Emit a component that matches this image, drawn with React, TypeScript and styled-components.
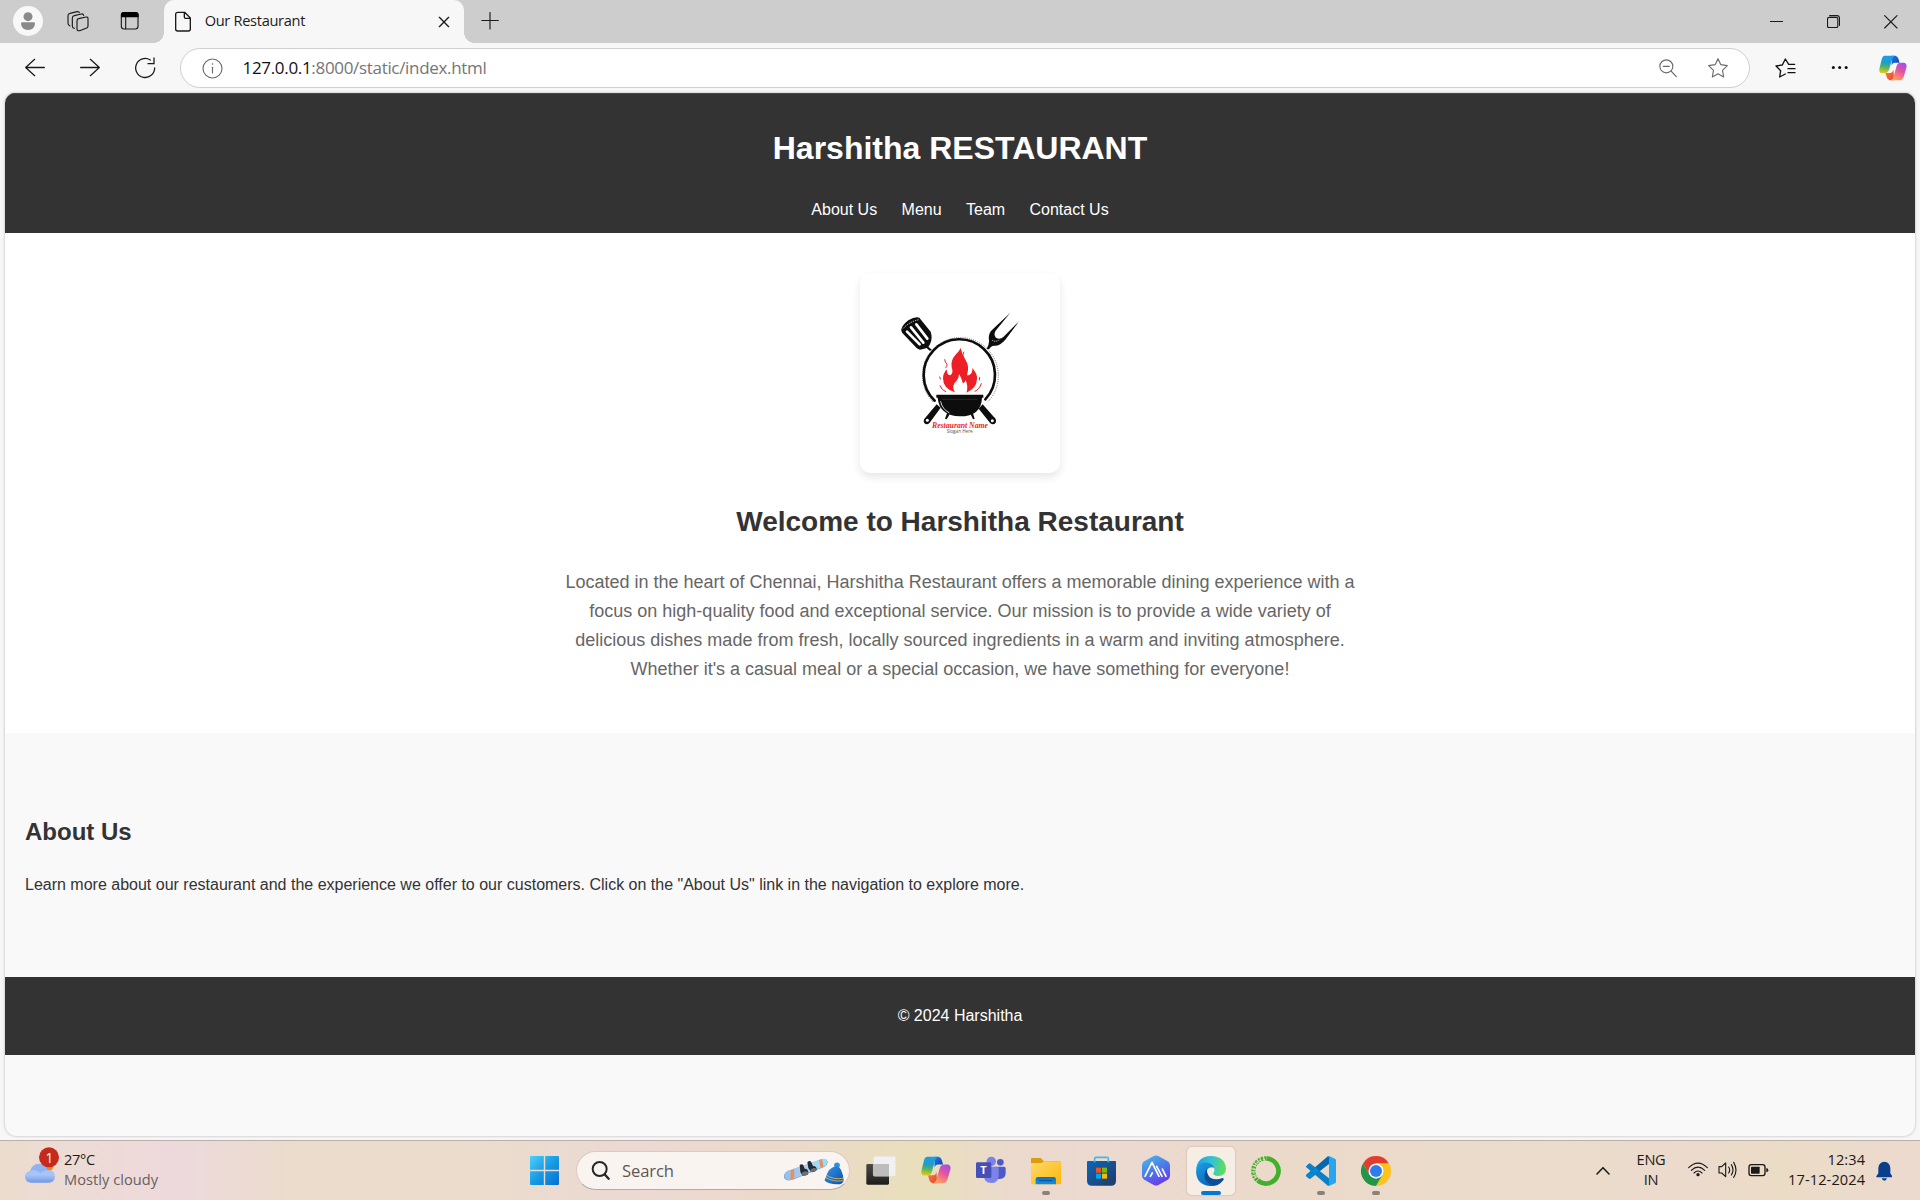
import React from "react";
import styled, { createGlobalStyle } from "styled-components";

const UI = `"Segoe UI", "Open Sans", "Noto Sans", sans-serif`;
const PAGE = `Arial, "Liberation Sans", sans-serif`;

const Global = createGlobalStyle`
  *, *::before, *::after { box-sizing: border-box; }
  body { margin: 0; background: #f7f7f7; overflow: hidden; }
  h1, h2, p { margin: 0; }
`;

const Screen = styled.div`
  width: 1920px;
  height: 1200px;
  display: flex;
  flex-direction: column;
  background: #f7f7f7;
  font-family: ${UI};
  overflow: hidden;
`;

/* ---------- icons ---------- */

/* Icons are drawn on a grid of three units per pixel. */
const Svg = styled.svg<{ $ml?: number; $dy?: number }>`
  display: block;
  flex: none;
  margin-left: ${(p) => p.$ml ?? 0}px;
  margin-top: ${(p) => p.$dy ?? 0}px;
`;

type GlyphProps = {
  box: [number, number, number, number];
  ml?: number;
  dy?: number;
  color?: string;
  sw?: number;
  children: React.ReactNode;
};

const Glyph = ({ box, ml, dy, color = "#1a1a1a", sw = 3.4, children }: GlyphProps) => (
  <Svg
    $ml={ml}
    $dy={dy}
    width={box[2] / 3}
    height={box[3] / 3}
    viewBox={box.join(" ")}
    fill="none"
    stroke={color}
    strokeWidth={sw}
    strokeLinecap="round"
    strokeLinejoin="round"
  >
    {children}
  </Svg>
);

const CopilotArt = ({ id }: { id: string }) => (
  <>
    <defs>
      <linearGradient id={id + "a"} x1="0.3" y1="0" x2="0.2" y2="1">
        <stop offset="0" stopColor="#1e9bea" />
        <stop offset="0.4" stopColor="#1f9fc4" />
        <stop offset="0.65" stopColor="#59b55c" />
        <stop offset="1" stopColor="#f5cb08" />
      </linearGradient>
      <linearGradient id={id + "b"} x1="0.8" y1="0" x2="0.3" y2="1">
        <stop offset="0" stopColor="#a04df0" />
        <stop offset="0.45" stopColor="#e5539f" />
        <stop offset="1" stopColor="#ffa35c" />
      </linearGradient>
      <linearGradient id={id + "c"} x1="0" y1="0" x2="1" y2="1">
        <stop offset="0" stopColor="#1b7fe0" />
        <stop offset="1" stopColor="#1436b8" />
      </linearGradient>
      <linearGradient id={id + "d"} x1="0" y1="0" x2="1" y2="1">
        <stop offset="0" stopColor="#f9862f" />
        <stop offset="1" stopColor="#e8403a" />
      </linearGradient>
    </defs>
    <g stroke="none">
      <path d="M41 0 H53 Q60 1 63 10 L67 23 H50 Q44 23 41 32 Z" fill={`url(#${id}c)`} />
      <path d="M49 80 H35 Q28 79 25 70 L21 56 H38 Q44 56 47 46 Z" fill={`url(#${id}d)`} />
      <path d="M19 0 H51 Q45 3 42 13 L33 45 Q29 57 18 57 H9 Q-2 56 2 39 L9 11 Q12 0 19 0 Z" fill={`url(#${id}a)`} />
      <path d="M72 23 H80 Q92 24 89 39 L80 69 Q76 80 67 80 H38 Q45 77 48 66 L57 34 Q60 23 72 23 Z" fill={`url(#${id}b)`} />
    </g>
  </>
);

/* ---------- browser chrome ---------- */

const TabStrip = styled.div`
  height: 43px;
  flex: none;
  display: flex;
  align-items: center;
  background: #cdcdcd;
`;

const Tab = styled.div`
  position: relative;
  width: 300px;
  height: 43px;
  margin-left: 24px;
  padding-left: 11px;
  display: flex;
  align-items: center;
  background: #f7f7f7;
  border-radius: 10px 10px 0 0;

  &::before,
  &::after {
    content: "";
    position: absolute;
    bottom: 0;
    width: 10px;
    height: 10px;
  }
  &::before {
    left: -10px;
    background: radial-gradient(circle at 0 0, #cdcdcd 9.5px, #f7f7f7 10px);
  }
  &::after {
    right: -10px;
    background: radial-gradient(circle at 100% 0, #cdcdcd 9.5px, #f7f7f7 10px);
  }
`;

const TabTitle = styled.span`
  width: 233.5px;
  margin-left: 13px;
  margin-top: -3px;
  font-size: 14.6px;
  letter-spacing: -0.3px;
  color: #1b1b1b;
  white-space: nowrap;
`;

const WindowControls = styled.div`
  display: flex;
  align-items: center;
  margin-left: auto;
  padding-right: 22px;
`;

const Toolbar = styled.div`
  height: 50px;
  flex: none;
  display: flex;
  align-items: center;
  padding-left: 25px;
`;

const AddressBar = styled.div`
  width: 1570px;
  height: 40px;
  margin-left: 24.5px;
  display: flex;
  align-items: center;
  background: #fff;
  border: 1px solid #cfcfcf;
  border-radius: 20px;
`;

const Url = styled.span`
  flex: 1;
  margin-left: 19.5px;
  margin-top: -2px;
  font-size: 17px;
  letter-spacing: -0.32px;
  color: #757575;
  white-space: nowrap;
  b { font-weight: 400; color: #111; }
`;

/* ---------- web page ---------- */

const Viewport = styled.div`
  width: 1910px;
  height: 1043px;
  flex: none;
  margin: 0 5px;
  display: flex;
  flex-direction: column;
  background: #f9f9f9;
  border-radius: 10px 10px 12px 12px;
  box-shadow: 0 0 2px 1px #d5d5d5;
  overflow: hidden;
  font-family: ${PAGE};
  color: #333;
`;

const Header = styled.header`
  height: 140px;
  flex: none;
  padding-top: 36px;
  background: #333;
  border-top: 1px solid #474747;
  color: #fff;
  text-align: center;
`;

const SiteTitle = styled.h1`
  font-size: 32px;
  line-height: 37px;
`;

const Nav = styled.nav`
  display: flex;
  justify-content: center;
  gap: 24.4px;
  margin-top: 34px;
  font-size: 16px;
  line-height: 18px;
`;

const Hero = styled.section`
  height: 500px;
  flex: none;
  display: flex;
  flex-direction: column;
  align-items: center;
  padding-top: 40px;
  background: #fff;
  text-align: center;
`;

const LogoCard = styled.div`
  width: 200px;
  height: 200px;
  border-radius: 10px;
  background: #fff;
  box-shadow: 0 4px 8px rgba(0, 0, 0, 0.1);
`;

const HeroTitle = styled.h2`
  margin-top: 32px;
  font-size: 28px;
  line-height: 33px;
`;

const HeroText = styled.p`
  width: 800px;
  margin-top: 30px;
  font-size: 18px;
  line-height: 29px;
  color: #666;
`;

const About = styled.section`
  height: 244px;
  flex: none;
  padding: 85px 20px 0;
`;

const AboutTitle = styled.h2`
  font-size: 24px;
  line-height: 28px;
`;

const AboutText = styled.p`
  margin-top: 30px;
  font-size: 16px;
  line-height: 18px;
`;

const Footer = styled.footer`
  height: 78px;
  flex: none;
  display: flex;
  align-items: center;
  justify-content: center;
  background: #333;
  color: #fff;
  font-size: 16px;
`;

/* ---------- taskbar ---------- */

const Taskbar = styled.div`
  height: 60px;
  flex: none;
  margin-top: 4px;
  display: flex;
  align-items: center;
  border-top: 1px solid #b9aea9;
  background: linear-gradient(90deg, #ebdccd 0, #eddbd6 80px, #edd9dc 180px, #ebdccb 300px, #ebdccd 480px, #ecd9d3 640px, #ebdac9 800px, #e9dfbb 920px, #ebdacd 1010px, #ecd9d1 1120px, #ebdac9 1300px, #ebdccb 1560px, #ecdacd 1680px, #ebdcc6 1780px, #ecdacf 1920px);
`;

const Weather = styled.div`
  width: 520px;
  display: flex;
  align-items: center;
  padding-left: 25px;
`;

const Lines = styled.div<{ $align?: string; $ml?: number; $w?: number; $ls?: number }>`
  display: flex;
  flex-direction: column;
  margin-left: ${(p) => p.$ml ?? 0}px;
  margin-top: -4px;
  width: ${(p) => (p.$w ? p.$w + "px" : "auto")};
  text-align: ${(p) => p.$align ?? "left"};
  font-size: 14.6px;
  line-height: 20px;
  letter-spacing: ${(p) => p.$ls ?? -0.3}px;
  color: #1d1a18;
  white-space: nowrap;
`;

const Muted = styled.span`
  color: #66605d;
  letter-spacing: 0.05px;
`;

const Cell = styled.div<{ $active?: boolean; $mark?: "dot" | "bar" }>`
  position: relative;
  width: 48px;
  height: 48px;
  flex: none;
  display: flex;
  align-items: center;
  justify-content: center;
  border-radius: 5px;
  background: ${(p) => (p.$active ? "#f6ede5" : "transparent")};
  box-shadow: ${(p) => (p.$active ? "0 0 1px 1px rgba(160, 130, 110, 0.18)" : "none")};

  &::after {
    content: "";
    display: ${(p) => (p.$mark ? "block" : "none")};
    position: absolute;
    bottom: 0;
    left: 50%;
    transform: translateX(-50%);
    width: ${(p) => (p.$mark === "bar" ? 20 : 8)}px;
    height: 4px;
    border-radius: 2px;
    background: ${(p) => (p.$mark === "bar" ? "#0078d4" : "#8b817b")};
  }
`;

const Apps = styled.div`
  display: flex;
  gap: 7px;
  margin-left: 7px;
`;

const Search = styled.div`
  width: 274px;
  height: 39px;
  margin-left: 8px;
  margin-top: -1px;
  padding-left: 14px;
  display: flex;
  align-items: center;
  border-radius: 20px;
  background: #faf4f1;
  border: 1px solid #dccac2;
  border-bottom-color: #b9a8a2;
`;

const SearchLabel = styled.span`
  width: 147px;
  margin-left: 12px;
  font-size: 16.6px;
  letter-spacing: -0.1px;
  color: #5d5855;
`;

const Tray = styled.div`
  flex: 1;
  display: flex;
  align-items: center;
`;

/* ---------- logo ---------- */

const RestaurantLogo = () => (
  <svg width="200" height="200" viewBox="60 38 600 600" fill="none">
    <g fill="#0d0d0d">
      <path d="M184 207 Q187 194 205 180 Q225 168 238 172 L272 214 Q278 232 271 249 Q266 263 258 264 L240 268 Q234 267 229 262 L187 218 Q183 213 184 207 Z" />
      <path d="M262 256 L276 269 L269 271 L259 262 Z" />
      <path d="M511 157 L468 210 Q459 222 468 232 Q479 239 490 230 L537 183 L496 238 Q480 257 463 256 Q452 257 447 267 L440 265 Q448 253 447 241 Q444 220 456 209 Z" />
      <path d="M289 403 H430 V412 H426 Q424 468 360 468 Q298 466 293 412 H289 Z" />
      <path d="M322 456 L330 460 L320 477 L315 475 Z M398 456 L391 460 L399 477 L404 475 Z" />
      <path d="M290 432 L302 442 L269 487 Q260 496 253 488 Q248 480 256 472 Z" />
      <path d="M428 432 L416 445 L451 489 Q461 496 467 487 Q471 476 461 469 Z" />
    </g>
    <path d="M190 204 Q210 183 237 178" stroke="#fff" strokeWidth="2.5" strokeDasharray="4 3" />
    <g stroke="#fff" strokeWidth="8" strokeLinecap="round">
      <path d="M201 214 L239 252 M213 201 L250 247 M229 192 L262 235" />
    </g>
    <path d="M284 421 A107 107 0 1 1 436 417" stroke="#0d0d0d" strokeWidth="8" strokeLinecap="round" />
    <path d="M279 425 A114 114 0 1 1 444 424" stroke="#333" strokeWidth="2.4" strokeDasharray="2.5 4" />
    <path d="M302 424 Q307 447 327 457" stroke="#fff" strokeWidth="2.5" strokeLinecap="round" />
    <path d="M306 417 H412" stroke="#444" strokeWidth="1.5" />
    <circle cx="262" cy="480" r="4.5" fill="#fff" />
    <circle cx="457" cy="481" r="4.5" fill="#fff" />
    <path d="M456 239 Q466 247 479 238" stroke="#fff" strokeWidth="2" strokeDasharray="4 2" />
    <g fill="#ee1f25">
      <path d="M362 263 Q366 284 378 301 Q388 318 382 340 Q379 348 388 344 Q399 338 397 323 Q413 341 411 357 Q409 386 379 397 Q386 379 377 360 Q373 371 368 367 Q364 351 357 341 Q356 357 343 369 Q336 383 345 396 Q309 386 309 354 Q309 340 320 327 Q321 347 332 344 Q341 338 335 321 Q332 299 346 284 Q358 273 362 263 Z" />
    </g>
    <g stroke="#ee1f25" strokeWidth="3" strokeLinecap="round">
      <path d="M314 298 Q315 306 321 312 Q322 319 318 322 M371 275 Q366 285 371 294 M299 350 L301 356 M300 376 Q305 390 317 394 M405 393 Q418 388 424 370 M419 351 L418 359" />
    </g>
    <text x="276" y="503" textLength="168" lengthAdjust="spacingAndGlyphs" fontFamily="'Liberation Serif', serif" fontStyle="italic" fontWeight="700" fontSize="22" fill="#ee1f25">Restaurant Name</text>
    <text x="320" y="519" textLength="78" lengthAdjust="spacingAndGlyphs" fontFamily="'Open Sans', sans-serif" fontSize="14" fill="#555">Slogan Here</text>
  </svg>
);

export default function App() {
  return (
    <Screen>
      <Global />
      <TabStrip>
        <Glyph box={[39, 18, 90, 90]} ml={13} dy={-1}>
          <g stroke="none">
            <circle cx="84" cy="63" r="45" fill="#f8f8f8" />
            <circle cx="84" cy="50" r="13.5" fill="#8a8a8a" />
            <path d="M67 67 H101 Q105 67 105 71 Q104 89 84 90 Q64 89 63 71 Q63 67 67 67 Z" fill="#8a8a8a" />
          </g>
        </Glyph>
        <Glyph box={[200, 30, 66, 66]} ml={23.7} dy={-1}>
          <path d="M235 56 L257 51 Q263 50 263 56 V78 Q263 82 259 84 L238 92 Q230 94 230 86 V62 Q230 57 235 56 Z" />
          <path d="M222 85 Q216 84 216 77 V54 Q216 48 222 47 L243 42 Q249 41 250 46" />
          <path d="M209 78 Q203 76 203 70 V47 Q203 41 209 40 L230 35 Q236 34 237 38" />
        </Glyph>
        <Glyph box={[361, 34, 60, 60]} ml={31.3} dy={-1}>
          <rect x="365" y="39" width="50" height="49" rx="8" />
          <path d="M364 53 V46 Q364 37 373 37 H407 Q417 37 417 46 V53 Z" fill="#000" stroke="none" />
          <path d="M378 53 V87" />
        </Glyph>
        <Tab>
          <Glyph box={[525, 34, 50, 64]} dy={1} sw={4}>
            <path d="M533 38 H554 L571 55 V88 Q571 94 565 94 H533 Q527 94 527 88 V44 Q527 38 533 38 Z M553 39 V52 Q553 56 557 56 H570" />
          </Glyph>
          <TabTitle>Our Restaurant</TabTitle>
          <Glyph box={[1315, 49, 36, 36]} dy={1} sw={4}>
            <path d="M1319 53 L1347 81 M1347 53 L1319 81" />
          </Glyph>
        </Tab>
        <Glyph box={[1444, 36, 54, 54]} ml={17.5} dy={-2}>
          <path d="M1446.500 61.500 H1496 M1471 37.500 V87" />
        </Glyph>
        <WindowControls>
          <Glyph box={[510, 45, 39, 39]}>
            <path d="M511 64.500 H548" strokeWidth="3" />
          </Glyph>
          <Glyph box={[681, 44, 40, 40]} ml={44}>
            <rect x="682.500" y="51" width="31" height="31" rx="5" />
            <path d="M689 46 H711 Q718.500 46 718.500 54 V75" />
          </Glyph>
          <Glyph box={[853, 44, 42, 42]} ml={44}>
            <path d="M855 46 L892 83 M892 46 L855 83" />
          </Glyph>
        </WindowControls>
      </TabStrip>
      <Toolbar>
        <Glyph box={[75, 172, 60, 57]} dy={-2} sw={3.8}>
          <path d="M77 200.500 H133 M104 176 L77 200.500 L104 225" />
        </Glyph>
        <Glyph box={[240, 172, 60, 57]} ml={35} dy={-2} sw={3.8}>
          <path d="M242 200.500 H298 M271 176 L298 200.500 L271 225" />
        </Glyph>
        <Glyph box={[404, 170, 63, 66]} ml={34.5} dy={-1} sw={3.8}>
          <path d="M450 179 A28.500 28.500 0 1 0 463 203 M461 173 V190 H443" strokeLinejoin="miter" />
        </Glyph>
        <AddressBar>
          <Glyph box={[606, 173, 63, 63]} ml={21} color="#6b6b6b">
            <circle cx="637.500" cy="204.500" r="28.500" />
            <path d="M637.500 201 V218" />
            <circle cx="637.500" cy="191" r="2.400" fill="#6b6b6b" stroke="none" />
          </Glyph>
          <Url><b>127.0.0.1</b>:8000/static/index.html</Url>
          <Glyph box={[179, 176, 57, 57]} color="#6b6b6b">
            <circle cx="201" cy="198" r="19.500" />
            <path d="M192 198 H210 M215 212 L231 229" />
          </Glyph>
          <Glyph box={[0, 0, 60, 60]} ml={30} color="#6b6b6b">
            <path d="M30 2 L38.500 20 L58 23 L43.500 37 L47 57 L30 47.500 L13 57 L16.500 37 L2 23 L21.500 20 Z" />
          </Glyph>
          <Svg $ml={19.7} width="1" height="1" />
        </AddressBar>
        <Glyph box={[524, 174, 63, 60]} ml={24.5} dy={-1} color="#111" sw={4}>
          <path d="M583 193 H565 L555 177 L546 195 L527 198 L541 212 L538 231 L555 222 M563 206 H584 M563 218 H584" />
        </Glyph>
        <Glyph box={[694, 195, 51, 15]} ml={35.5} dy={-1}>
          <g fill="#111" stroke="none">
            <circle cx="701" cy="202.500" r="4.600" />
            <circle cx="720" cy="202.500" r="4.600" />
            <circle cx="739.500" cy="202.500" r="4.600" />
          </g>
        </Glyph>
        <Svg $ml={30.5} width="28" height="26" viewBox="0 -1 91 82">
          <CopilotArt id="tb" />
        </Svg>
      </Toolbar>

      <Viewport>
        <Header>
          <SiteTitle>Harshitha RESTAURANT</SiteTitle>
          <Nav>
            <span>About Us</span>
            <span>Menu</span>
            <span>Team</span>
            <span>Contact Us</span>
          </Nav>
        </Header>
        <Hero>
          <LogoCard>
            <RestaurantLogo />
          </LogoCard>
          <HeroTitle>Welcome to Harshitha Restaurant</HeroTitle>
          <HeroText>
            Located in the heart of Chennai, Harshitha Restaurant offers a memorable dining experience with a focus on
            high-quality food and exceptional service. Our mission is to provide a wide variety of delicious dishes made
            from fresh, locally sourced ingredients in a warm and inviting atmosphere. Whether it's a casual meal or a
            special occasion, we have something for everyone!
          </HeroText>
        </Hero>
        <About>
          <AboutTitle>About Us</AboutTitle>
          <AboutText>
            Learn more about our restaurant and the experience we offer to our customers. Click on the "About Us" link
            in the navigation to explore more.
          </AboutText>
        </About>
        <Footer>© 2024 Harshitha</Footer>
      </Viewport>

      <Taskbar>
        <Weather>
          <Glyph box={[75, 82, 102, 108]} dy={-11}>
            <defs>
              <linearGradient id="cloud" x1="0" y1="0" x2="0" y2="1">
                <stop offset="0" stopColor="#a9c8f7" />
                <stop offset="0.6" stopColor="#a6c4f8" />
                <stop offset="1" stopColor="#6f98e8" />
              </linearGradient>
            </defs>
            <g stroke="none">
              <circle cx="143" cy="139" r="17" fill="#f5821f" />
              <path d="M92 189 Q75 187 75 170 Q76 156 91 153 Q96 133 117 132 Q137 133 142 151 Q165 150 165 170 Q165 187 148 189 Z" fill="url(#cloud)" />
              <path d="M91 153 Q96 133 117 132 Q137 133 142 151 Q128 153 121 161 Q108 147 91 153 Z" fill="#7ea6ee" opacity="0.6" />
              <circle cx="147" cy="113" r="30" fill="#c42b1c" />
              <text x="148" y="129" textAnchor="middle" fontFamily="Open Sans, sans-serif" fontSize="41" fill="#fff">1</text>
            </g>
          </Glyph>
          <Lines $ml={5}>
            <span>27°C</span>
            <Muted>Mostly cloudy</Muted>
          </Lines>
        </Weather>
        <Cell>
          <Svg width="29" height="29" viewBox="0 0 29 29">
            <defs>
              <linearGradient id="win" x1="0" y1="0" x2="29" y2="29" gradientUnits="userSpaceOnUse">
                <stop offset="0" stopColor="#4cd0fb" />
                <stop offset="0.5" stopColor="#189be4" />
                <stop offset="1" stopColor="#0670cf" />
              </linearGradient>
            </defs>
            <path fill="url(#win)" d="M1 0H13.800V13.800H0V1Q0 0 1 0ZM15.200 0H28Q29 0 29 1V13.800H15.200ZM0 15.200H13.800V29H1Q0 29 0 28ZM15.200 15.200H29V28Q29 29 28 29H15.200Z" />
          </Svg>
        </Cell>
        <Search>
          <Glyph box={[241, 90, 57, 60]} sw={6} color="#262626">
            <circle cx="267" cy="117" r="21" />
            <path d="M283 134 L294 146" strokeWidth="7" />
          </Glyph>
          <SearchLabel>Search</SearchLabel>
          <Glyph box={[817, 84, 186, 84]} dy={3} ml={13.5}>
            <defs>
              <linearGradient id="board" x1="0" y1="0" x2="1" y2="0">
                <stop offset="0" stopColor="#8fbfe8" />
                <stop offset="0.5" stopColor="#b4cdf2" />
                <stop offset="1" stopColor="#8fe2f7" />
              </linearGradient>
              <linearGradient id="hat" x1="0" y1="0" x2="1" y2="1">
                <stop offset="0" stopColor="#2f97ec" />
                <stop offset="1" stopColor="#0d4fa4" />
              </linearGradient>
            </defs>
            <g stroke="none">
              <path d="M831 124 L935 87 Q950 86 951 97 Q950 106 940 111 L850 148 Q828 156 820 144 Q818 130 831 124 Z" fill="#6f97c6" />
              <path d="M831 122 L935 86 Q949 85 950 96 Q949 105 939 110 L850 146 Q828 155 821 142 Q819 128 831 122 Z" fill="url(#board)" />
              <path d="M840 121 L850 118 L851 146 L839 150 Z M925 90 L934 87 L939 110 L930 114 Z" fill="#e8915f" />
              <path d="M867 106 Q873 100 878 106 L882 116 Q894 116 893 130 Q888 138 876 137 L869 126 Z M890 97 Q897 89 902 97 L907 108 Q919 108 918 120 Q912 128 901 126 L893 114 Z" fill="#262b33" />
              <path d="M873 129 Q884 120 893 127 L892 134 Q884 138 876 137 Z M899 119 Q910 110 918 117 L916 123 Q909 127 901 126 Z" fill="#6b6f78" />
              <circle cx="979" cy="106" r="8.500" fill="#2b8fe8" />
              <path d="M945 144 Q953 111 978 108 Q996 113 999 152 Q996 164 978 163 Q954 162 942 152 Q942 146 945 144 Z" fill="url(#hat)" />
            </g>
            <path d="M948 136 Q968 150 996 145 M946 143 Q967 157 997 152" stroke="#e2b863" strokeWidth="2.500" />
          </Glyph>
        </Search>
        <Apps>
          <Cell>
            <Svg width="30" height="29" viewBox="0 0 90 87">
              <defs>
                <linearGradient id="tv" x1="0" y1="0" x2="0" y2="1">
                  <stop offset="0" stopColor="#4a4a48" />
                  <stop offset="1" stopColor="#1d1d1c" />
                </linearGradient>
              </defs>
              <rect x="1" y="24" width="68" height="62" rx="4" fill="url(#tv)" />
              <rect x="22" y="1" width="67" height="60" rx="4" fill="#f1f1f1" stroke="#dcdcdc" />
              <path d="M23 24 H69 V60 H26 Q23 60 23 57 Z" fill="#bdbdbb" />
            </Svg>
          </Cell>
          <Cell>
            <Svg width="30" height="28" viewBox="0 -1 91 82" $dy={-2}>
              <CopilotArt id="task" />
            </Svg>
          </Cell>
          <Cell>
            <Svg width="30" height="28" viewBox="228 78 90 84" $dy={-1}>
              <circle cx="274" cy="94" r="14" fill="#7b83eb" />
              <circle cx="301" cy="97" r="10" fill="#5059c9" />
              <path d="M284 110 H313 Q317 110 317 115 V130 Q316 147 299 147 H284 Z" fill="#5059c9" />
              <path d="M252 110 H290 Q296 110 296 116 V137 Q295 159 274 159 Q252 158 252 137 Z" fill="#7b83eb" />
              <rect x="228" y="97" width="46" height="47" rx="4" fill="#464eb8" />
              <text x="250.500" y="132" textAnchor="middle" fontFamily="Open Sans, sans-serif" fontWeight="700" fontSize="33" fill="#fff">T</text>
            </Svg>
          </Cell>
          <Cell $mark="dot">
            <Svg width="30" height="28" viewBox="393 78 90 84">
              <defs>
                <linearGradient id="fold" x1="0" y1="0" x2="1" y2="1">
                  <stop offset="0" stopColor="#ffd968" />
                  <stop offset="1" stopColor="#fbb70d" />
                </linearGradient>
                <linearGradient id="foldb" x1="0" y1="0" x2="0" y2="1">
                  <stop offset="0" stopColor="#0a70c4" />
                  <stop offset="1" stopColor="#1590e0" />
                </linearGradient>
              </defs>
              <path d="M396 81 H422 L431 90 H480 V110 H393 V84 Q393 81 396 81 Z" fill="#dd9c0c" />
              <path d="M393 96 H424 L432 91 H480 Q483 91 483 94 V156 Q483 160 480 160 H396 Q393 160 393 157 Z" fill="url(#fold)" />
              <path d="M407 160 V145 Q407 138 414 138 H461 Q468 138 468 145 V160 Z" fill="url(#foldb)" />
              <path d="M418 149 H457" stroke="#0a4f96" strokeWidth="3" />
            </Svg>
          </Cell>
          <Cell>
            <Svg width="29" height="30" viewBox="558 76 87 90">
              <defs>
                <linearGradient id="store" x1="0" y1="0" x2="1" y2="1">
                  <stop offset="0" stopColor="#0b66b8" />
                  <stop offset="1" stopColor="#243a66" />
                </linearGradient>
              </defs>
              <path d="M561 91 H642 Q645 91 645 94 V150 Q645 165 630 165 H573 Q558 165 558 150 V94 Q558 91 561 91 Z" fill="url(#store)" />
              <path d="M581 95 V84 Q581 80 585 80 H618 Q622 80 622 84 V95" fill="none" stroke="#35bff0" strokeWidth="5" />
              <path d="M585 111 H600 V126 H585 Z" fill="#f25022" />
              <path d="M603 111 H618 V126 H603 Z" fill="#7fba00" />
              <path d="M585 129 H600 V144 H585 Z" fill="#00a4ef" />
              <path d="M603 129 H618 V144 H603 Z" fill="#ffb900" />
            </Svg>
          </Cell>
          <Cell>
            <Svg width="30" height="31" viewBox="0 0 90 93">
              <defs>
                <linearGradient id="hex" x1="0.2" y1="0" x2="0.7" y2="1">
                  <stop offset="0" stopColor="#4cb4ea" />
                  <stop offset="0.5" stopColor="#4d78ea" />
                  <stop offset="1" stopColor="#6a35ea" />
                </linearGradient>
              </defs>
              <path d="M38 3 Q45 0 52 3 L80 19 Q87 23 87 31 V62 Q87 70 80 74 L52 90 Q45 93 38 90 L10 74 Q3 70 3 62 V31 Q3 23 10 19 Z" fill="url(#hex)" />
              <path d="M12 64 L33 22 L54 64 M28 64 L34 54 M47 34 L63 64 M64 42 L75 64" fill="none" stroke="#fff" strokeWidth="5" strokeLinecap="round" strokeLinejoin="round" />
            </Svg>
          </Cell>
          <Cell $active $mark="bar">
            <Svg width="30" height="30" viewBox="138 75 90 90">
              <defs>
                <linearGradient id="e1" x1="0" y1="0.3" x2="1" y2="0.4">
                  <stop offset="0" stopColor="#1d9fe0" />
                  <stop offset="0.5" stopColor="#35c1d4" />
                  <stop offset="1" stopColor="#5fe05a" />
                </linearGradient>
                <linearGradient id="e2" x1="0" y1="0" x2="0.5" y2="1">
                  <stop offset="0" stopColor="#1ca0e0" />
                  <stop offset="1" stopColor="#0a68c0" />
                </linearGradient>
              </defs>
              <path d="M138 118 Q141 76 183 75 Q226 77 228 113 Q227 134 205 135 Q188 134 190 126 Q196 119 192 110 Q184 97 166 98 Q148 100 138 118 Z" fill="url(#e1)" />
              <path d="M138 120 Q144 93 171 95 Q187 97 193 110 Q180 106 172 115 Q160 133 174 149 Q182 159 196 163 Q187 166 179 165 Q139 161 138 120 Z" fill="url(#e2)" />
              <path d="M172 112 Q168 129 181 140 Q198 149 217 141 Q223 141 221 146 Q209 162 193 164 Q172 160 165 143 Q160 124 172 112 Z" fill="#0c4f97" />
            </Svg>
          </Cell>
          <Cell>
            <Svg width="30" height="30" viewBox="0 0 90 90" fill="none" stroke="#43b02a">
              <path d="M46 7.500 A37.500 37.500 0 1 1 20 73" strokeWidth="14" />
              <path d="M45 7 A38 38 0 0 0 18 72" strokeWidth="13" strokeDasharray="5 3 8 2.500" />
              <path d="M42 10 A35 35 0 0 0 16 67" stroke="#ebdccf" strokeWidth="3.500" strokeDasharray="6 5" />
              <path d="M38 3 A42 42 0 0 0 6 62" stroke="#ebdccf" strokeWidth="3" strokeDasharray="3 7" />
            </Svg>
          </Cell>
          <Cell $mark="dot">
            <Svg width="30" height="30" viewBox="468 75 90 90">
              <path d="M468 106 L476 98 Q479 96 482 98 L537 142 V164 Q534 165 531 162 L469 109 Q467 107 468 106 Z" fill="#0b7fc9" />
              <path d="M468 135 L476 142 Q479 144 482 142 L537 99 V76 Q534 75 531 78 L469 131 Q467 133 468 135 Z" fill="#0668ae" />
              <path d="M468 135 L476 142 Q479 144 482 142 L510 120 L496 108 L469 131 Q467 133 468 135 Z" fill="#0a85cf" />
              <path d="M537 75 L555 83 Q558 85 558 88 V152 Q558 155 555 157 L537 165 Q533 166 531 162 Q537 165 537 160 V80 Q537 75 531 78 Q533 74 537 75 Z" fill="#27a5ef" />
            </Svg>
          </Cell>
          <Cell $mark="dot">
            <Svg width="30" height="30" viewBox="0 0 90 90">
              <path d="M6 22.500 A45 45 0 0 1 84 22.500 H45 L25.500 56 Z" fill="#e33b2e" />
              <path d="M84 22.500 A45 45 0 0 1 45 90 L64.500 56.200 L64.500 33.700 L45 22.500 Z" fill="#fcc31e" />
              <path d="M6 22.500 A45 45 0 0 0 45 90 L64.500 56.200 L45 67.500 L25.500 56.200 Z" fill="#249446" />
              <circle cx="45" cy="45" r="22.500" fill="#fff" />
              <circle cx="45" cy="45" r="18" fill="#2f7bed" />
            </Svg>
          </Cell>
        </Apps>
        <Tray>
          <Glyph box={[108, 105, 42, 27]} ml={196} sw={4.6}>
            <path d="M111 129 L129 110 L147 129" />
          </Glyph>
          <Lines $align="center" $ml={22} $w={38}>
            <span>ENG</span>
            <span>IN</span>
          </Lines>
          <Glyph box={[384, 96, 60, 45]} ml={18} dy={-2}>
            <path d="M386 113 Q414 86 442 113 M394 121 Q414 102 434 121 M402 129 Q414 117 426 129" />
            <circle cx="414" cy="134" r="5" fill="#1a1a1a" stroke="none" />
          </Glyph>
          <Glyph box={[473, 93, 63, 54]} ml={9.7} dy={-1}>
            <path d="M476 110 H484 L496 99 V140 L484 129 H476 Z M505 111 Q511 120 505 129 M513 104 Q523 120 513 135 M520 97 Q534 120 520 142" />
          </Glyph>
          <Glyph box={[563, 99, 63, 42]} ml={9} dy={-1} sw={4}>
            <rect x="566" y="104" width="48" height="33" rx="7" />
            <rect x="572" y="110" width="26" height="21" rx="2" fill="#1a1a1a" stroke="none" />
            <path d="M618 114 Q624 116 624 120.500 Q624 125 618 127 Z" fill="#1a1a1a" stroke="none" />
          </Glyph>
          <Lines $align="right" $ml={14.5} $w={82} $ls={0.1}>
            <span>12:34</span>
            <span>17-12-2024</span>
          </Lines>
          <Glyph box={[950, 91, 50, 60]} ml={10.5} color="#0a3f8c">
            <path d="M975 93 Q991 94 993 111 V128 L999 137 V140 H951 V137 L957 128 V111 Q959 94 975 93 Z M967 143 H983 Q981 150 975 150 Q969 150 967 143 Z" fill="#0a3f8c" stroke="none" />
          </Glyph>
        </Tray>
      </Taskbar>
    </Screen>
  );
}
